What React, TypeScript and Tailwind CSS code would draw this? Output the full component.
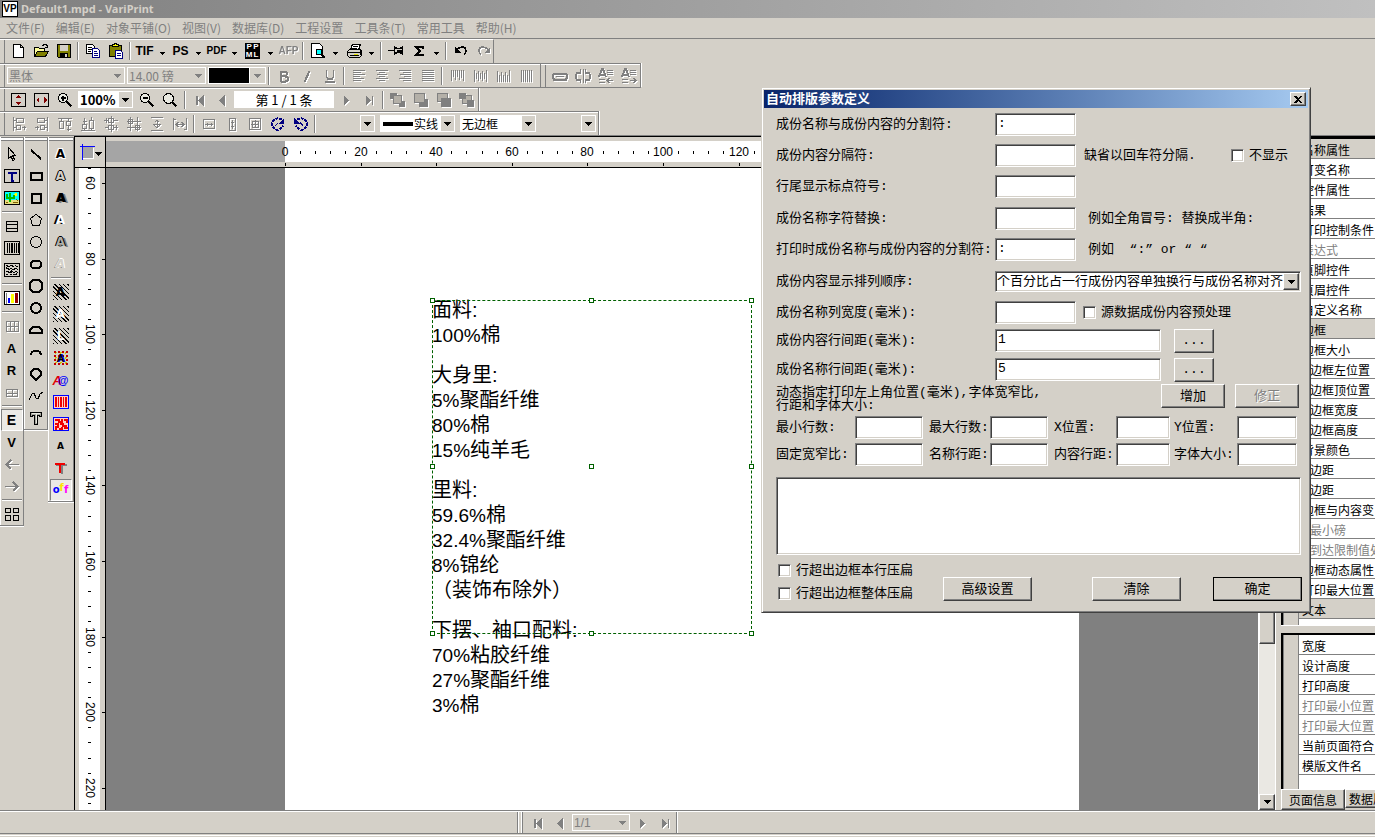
import { ReactNode } from 'react';
import clsx from 'clsx';

const MENU = ['文件(F)', '编辑(E)', '对象平铺(O)', '视图(V)', '数据库(D)', '工程设置', '工具条(T)', '常用工具', '帮助(H)'];

// 16x16 glyphs, drawn with the current text colour unless they carry their own
const ICONS: Record<string, ReactNode> = {
  new: <path d="M3.5 1.5h7l3 3v10h-10zM10.5 1.5v3h3" fill="#fff" />,
  open: (
    <>
      <path d="M1.5 13.5v-9h4l1 1h5v3" fill="#ffff9c" />
      <path d="M1.5 13.5l3-5h11l-3 5z" fill="#808000" />
      <path d="M9 2.5h1l1-1h2l1 1v2M12 4.5h3" />
    </>
  ),
  save: (
    <>
      <path d="M1.5 1.5h13v13h-12l-1-1z" fill="#808000" />
      <path d="M4 2h8v6H4z" fill="#d4d0c8" stroke="none" />
      <path d="M4 10h8v5H4z" fill="#000" stroke="none" />
      <path d="M9 11h2v3H9z" fill="#d4d0c8" stroke="none" />
    </>
  ),
  copy: (
    <>
      <path d="M1.5 1.5h6l2 2v7h-8z" fill="#fff" />
      <path d="M3 4.5h4M3 6.5h4M3 8.5h3" />
      <path d="M7.5 5.5h5l2 2v7h-7z" fill="#fff" stroke="#000080" />
      <path d="M9 8.5h3M9 10.5h4M9 12.5h4" stroke="#000080" />
    </>
  ),
  paste: (
    <>
      <path d="M1.5 2.5h12v11h-12z" fill="#808000" />
      <path d="M4.5 3.5h6v-2h-2v-1h-2v1h-2z" fill="#ffff00" />
      <path d="M7.5 7.5h5l2 2v6h-7z" fill="#fff" stroke="#000080" />
      <path d="M9 10.5h4M9 12.5h4" stroke="#000080" />
    </>
  ),
  preview: (
    <>
      <path d="M1.5 .5h8l3 3v11h-11z" fill="#fff" />
      <circle cx="9" cy="9" r="3" fill="#00ffff" />
      <path d="M11 11l4 4" strokeWidth="2" />
    </>
  ),
  print: (
    <>
      <path d="M4.5 7l2-6h8l-2 6" fill="#fff" />
      <path d="M7 3.5h5M6 5.5h5" />
      <path d="M1.5 8.5l2-2h11l1 2v4l-2 2h-10l-2-2z" fill="#d4d0c8" />
      <path d="M2 9.5h12M4 12.5h9M14.5 8v4" />
      <path d="M8 11h4" stroke="#e0e000" />
    </>
  ),
  pin: (
    <>
      <path d="M0 7.5h6" strokeWidth="1.5" />
      <path d="M6.5 3v9M14.5 3v9M7 5.5h7M7 9.5h7" />
      <path d="M9 7h5v3H9z" fill="#000" stroke="none" />
      <path d="M7.5 4l2 2M13.5 4l-2 2M7.5 11l2-2M13.5 11l-2-2" />
    </>
  ),
  sigma: <path d="M12 5.5V4H5l4 4-4 4h7v-1.5" strokeWidth="2" />,
  undo: (
    <>
      <path d="M4 7c2-3 6-4 8-2 2 3 1 5-1 6" strokeWidth="1.5" />
      <path d="M2 4v6h6z" fill="currentColor" stroke="none" />
    </>
  ),
  redo: (
    <>
      <path d="M12 7c-2-3-6-4-8-2-2 3-1 5 1 6" strokeWidth="1.5" />
      <path d="M14 4v6H8z" fill="currentColor" stroke="none" />
    </>
  ),
  bold: <path d="M4.5 3.5h5l1.5 1v2l-1.5 1.5h-4.5M9.5 8.5l2 1v3l-2 1h-5M5 3v11" strokeWidth="2" />,
  italic: <path d="M10.5 3l-5 11" strokeWidth="2" />,
  underline: <path d="M4.5 2v7l1.5 2h4l1.5-2V2M3 14h10" strokeWidth="1.5" />,
  alignLeft: <path d="M2 2.5h12M2 4.5h8M2 6.5h12M2 8.5h7M2 10.5h11M2 12.5h8" />,
  alignCenter: <path d="M2 2.5h12M5 4.5h6M3 6.5h10M5 8.5h6M2 10.5h12M5 12.5h6" />,
  alignRight: <path d="M2 2.5h12M6 4.5h8M3 6.5h11M7 8.5h7M2 10.5h12M6 12.5h8" />,
  justify: <path d="M2 2.5h12M2 4.5h12M2 6.5h12M2 8.5h12M2 10.5h12M2 12.5h12" />,
  vTop: <path d="M2.5 2v11M4.5 2v7M6.5 2v10M8.5 2v7M10.5 2v10M12.5 2v8M14.5 2v11" />,
  vMid: <path d="M2.5 2v12M4.5 5v6M6.5 3v10M8.5 5v6M10.5 3v10M12.5 5v6M14.5 2v12" />,
  vBottom: <path d="M2.5 3v11M4.5 7v7M6.5 4v10M8.5 7v7M10.5 4v10M12.5 7v7M14.5 2v12" />,
  vFull: <path d="M3.5 2v12M5.5 2v12M7.5 2v12M9.5 2v12M11.5 2v12M13.5 2v12" />,
  link: (
    <>
      <path d="M2 5.500h12l1 2v2l-1 2H2l-1-2v-2z" strokeWidth="2" />
      <path d="M4 8.500h8" strokeWidth="1.500" />
    </>
  ),
  unlink: (
    <>
      <path d="M6 5H2L1 7v3l1 2h4M10 5h4l1 2v3l-1 2h-4" strokeWidth="2" />
      <path d="M8 1v14M5 1l1 3M11 1l-1 3M5 15l1-3M11 15l-1-3" />
    </>
  ),
  fontLeft: (
    <>
      <path d="M1 9l3-8h1l3 8M2.5 6.5h4" strokeWidth="2" />
      <path d="M9 2.5h6M9 4.5h6M9 6.5h6M1 11.5h6M1 14.5h6" />
      <path d="M15 12.5H9M11.5 10L9 12.5l2.5 2.5" strokeWidth="1.5" />
    </>
  ),
  fontRight: (
    <>
      <path d="M1 9l3-8h1l3 8M2.5 6.5h4" strokeWidth="2" />
      <path d="M9 2.5h6M9 4.5h6M9 6.5h6M1 11.5h6M1 14.5h6" />
      <path d="M9 12.5h6M12.5 10l2.5 2.5-2.5 2.5" strokeWidth="1.5" />
    </>
  ),
  fitHeight: (
    <>
      <path d="M.5 1.5h14v13H.5z" />
      <path d="M7.500 3l3 3h-6zM7.500 13l3-3h-6z" fill="#800000" stroke="none" />
    </>
  ),
  fitWidth: (
    <>
      <path d="M.5 1.5h14v13H.5z" />
      <path d="M2 8l3-3v6zM13 8l-3-3v6zM5 7.500h1M9 7.500h1" fill="#800000" stroke="none" />
    </>
  ),
  zoomIn: (
    <>
      <circle cx="6" cy="6" r="4.5" fill="#e8e8e0" />
      <path d="M3.5 6h5M6 3.5v5" strokeWidth="1.5" />
      <path d="M9.5 9.5l5 5" strokeWidth="2.5" />
    </>
  ),
  zoomOut: (
    <>
      <circle cx="6" cy="6" r="4.5" fill="#e8e8e0" />
      <path d="M3.5 6h5" strokeWidth="1.5" />
      <path d="M9.5 9.5l5 5" strokeWidth="2.5" />
    </>
  ),
  zoom: (
    <>
      <circle cx="6.5" cy="6.5" r="5" fill="#e8e8e0" />
      <path d="M10 10l4.5 4.5" strokeWidth="2.5" />
    </>
  ),
  first: <path d="M4.5 4v9M5.5 4v9M11 4v9L7 8.5z" fill="currentColor" />,
  prev: <path d="M9 4v9L5 8.5z" fill="currentColor" />,
  next: <path d="M6 4v9l4-4.5z" fill="currentColor" />,
  last: <path d="M11.5 4v9M5 4v9l4-4.5z" fill="currentColor" />,
  front: (
    <>
      <path d="M0 1h7v6H0zM9 9h6v6H9z" fill="currentColor" stroke="none" />
      <path d="M3.5 3.5h8v8h-8z" fill="#b4b0a8" />
    </>
  ),
  forward: (
    <>
      <path d="M6 7h9v8H6z" fill="currentColor" stroke="none" />
      <path d="M1.5 1.500h10v9h-10z" fill="#b4b0a8" />
    </>
  ),
  backward: (
    <>
      <path d="M1.5 1.500h10v8h-10z" fill="#b4b0a8" />
      <path d="M5 6h10v9H5z" fill="currentColor" stroke="none" />
    </>
  ),
  back: (
    <>
      <path d="M3.5 3.5h9v8h-9z" fill="#b4b0a8" />
      <path d="M0 1h7v6H0zM8 8h7v7H8z" fill="currentColor" stroke="none" />
    </>
  ),
  objLeft: <path d="M2.5 1v14M3 4.5h2M5.5 2.5h7v4h-7zM3 11.5h2M5.5 9.5h4v4h-4zM11 11.5h4M13 9.5v4" />,
  objRight: <path d="M13.5 1v14M11 4.5h2M3.5 2.5h7v4h-7zM11 11.5h2M6.5 9.5h4v4h-4zM1 11.5h4M3 9.5v4" />,
  objTop: <path d="M1 2.5h14M4.5 3v2M2.5 5.5h4v7h-4zM11.5 3v2M9.5 5.5h4v4h-4zM11.5 10v5M9.5 13h4" />,
  objBottom: <path d="M1 14.5h14M4.5 12v2M2.5 8.5h4v4h-4zM4.5 2v6M2.5 5h4M9.5 4.5h4v8h-4zM11.5 12v2M11.5 1v3" />,
  objCenter: <path d="M1 4.5h4M10 4.5h5M5.5 2.5h5v4h-5zM2 11.5h3M11 11.5h4M5.5 9.5h5v4h-5zM8 0v16M3 2v5M13 9v5" />,
  objMiddle: <path d="M1 5.5h14M1 11.5h14M4.5 1v14M11.5 1v14M2.5 3.5h4v4h-4zM9.5 9.5h4v4h-4z" />,
  spaceV: <path d="M2 1.5h12M2 14.5h12M8 4v8M5.5 6.5L8 4l2.5 2.5M5.5 9.5L8 12l2.5-2.5M4 8.5h8" />,
  spaceH: <path d="M1.5 2v12M14.5 2v12M4 8.5h8M6.5 6L4 8.5 6.5 11M9.5 6l2.5 2.5L9.5 11M1 3.5h3M12 13.5h3" />,
  sameW: <path d="M2.5 3.5h11v9h-11zM4 8.500h8M6 7v3M10 7v3" />,
  sameH: <path d="M5.5 2.5h6v12h-6zM8.5 4v9M7 6.500h3M7 10.500h3" />,
  sameSize: <path d="M2.5 2.5h11v11h-11zM4 8.500h8M8.500 4v8M5.500 5.500h6v6h-6z" />,
  rotateRight: (
    <>
      <path d="M12 4C9 1 3 2 2 8c0 4 4 7 8 5l3-3" strokeWidth="2" strokeDasharray="3 1" />
      <path d="M14 2v6H8z" fill="currentColor" stroke="none" />
      <path d="M5 10l3-3" />
    </>
  ),
  rotateLeft: (
    <>
      <path d="M4 4c3-3 9-2 10 4 0 4-4 7-8 5l-3-3" strokeWidth="2" strokeDasharray="3 1" />
      <path d="M1 2v6h6z" fill="currentColor" stroke="none" />
      <path d="M7 6l3 4" />
    </>
  ),
  // drawing tools
  pointer: <path d="M4.5 1.5v11l2.500-2 2 4 1.500-1-2-4h3z" fill="#d4d0c8" />,
  text: (
    <>
      <path d="M.5 1.5h15v13H.5z" fill="#d4d0c8" />
      <path d="M4.5 6V4.5h7V6M8 4.5v8M6.5 12.5h3" stroke="#000080" strokeWidth="2" />
    </>
  ),
  picture: (
    <>
      <path d="M.5 1.5h15v13H.5z" fill="#00ffff" />
      <path d="M1 10h14v4H1z" fill="#e8e080" stroke="none" />
      <path d="M3 4v4h7V5M6 3v9" stroke="#00c000" strokeWidth="2" />
      <circle cx="12" cy="4.5" r="1.5" fill="#ffff00" stroke="none" />
      <path d="M9 12h5M12 9l2 2M2 12h2" stroke="#806000" />
    </>
  ),
  list: <path d="M2.5 3.5h11v10h-11zM3 6.5h10M3 10.5h10" />,
  barcode: (
    <>
      <path d="M.5 1.5h15v13H.5z" fill="#d4d0c8" />
      <path d="M3.5 3v10M12.5 3v10M14.500 3v10M5.500 3v10" />
      <path d="M8 3v10" strokeWidth="2" />
      <path d="M10.500 3v10" />
    </>
  ),
  matrix: (
    <>
      <path d="M.5 1.5h15v13H.5z" fill="#d4d0c8" />
      <path
        d="M2 3.500h2M6 3.500h3M11 3.500h1M3 4.500h3M8 4.500h2M12 4.500h2M2 6.500h3M6 6.500h2M10 6.500h3M4 7.500h2M8 7.500h3M13 7.500h1M2 9.500h3M6 9.500h3M11 9.500h2M4 10.500h3M9 10.500h2M13 10.500h1M2 12.500h2M6 12.500h2M9 12.500h3M2.500 5v2M7.500 8v3M12.500 11v2"
      />
    </>
  ),
  chart: (
    <>
      <path d="M.5 1.5h15v13H.5z" fill="#fff" />
      <path d="M2.500 3v10.500" stroke="#808080" />
      <path d="M4 8h2v5H4z" fill="#0000ff" stroke="none" />
      <path d="M7 4h3v9H7z" fill="#ffff00" stroke="none" />
      <path d="M11 3h3v10h-3z" fill="#900000" stroke="none" />
    </>
  ),
  grid: <path d="M2.5 3.5h12v10h-12zM6.5 4v10M10.5 4v10M3 8.5h12" />,
  gridSmall: <path d="M2.5 5.5h11v7h-11zM8 6v6M3 9h11" />,
  arrowLeft: <path d="M15 8.5H3M7 4L2.5 8.5 7 13" strokeWidth="1.5" />,
  arrowRight: <path d="M1 8.5h12M9 4l4.5 4.5L9 13" strokeWidth="1.5" />,
  blocks: <path d="M1.5 2.5h5v4h-5zM9.5 2.5h5v4h-5zM1.5 9.5h5v5h-5zM9.5 9.5h5v5h-5z" />,
  line: <path d="M3 4l10 9" strokeWidth="2" />,
  rect: <path d="M3 5h11v7H3z" strokeWidth="2" />,
  square: <path d="M4 4h9v9H4z" strokeWidth="2" />,
  pentagon: <path d="M8 2.5l5.5 4-2 7h-7l-2-7z" />,
  circle: <circle cx="8" cy="8" r="5.5" />,
  pill: <rect x="3" y="5" width="10" height="7" rx="3" strokeWidth="2" />,
  octagon: <path d="M5 2h6l3 3v6l-3 3H5l-3-3V5z" strokeWidth="2" />,
  ellipse: <circle cx="8" cy="8" r="5" strokeWidth="2" />,
  halfMoon: <path d="M2 11V8l3-3h6l3 3v3z" strokeWidth="2" />,
  arc: <path d="M3 11c1-6 9-6 10 0" strokeWidth="2" />,
  pie: <path d="M8 14L3 9V6l3-3h4l3 3v3z" strokeWidth="2" />,
  curve: <path d="M1 12l3-6 2-1 2 5 2 1 2-5 3-2" />,
  bigT: (
    <>
      <path d="M2.500 2.500h11v4h-2v-1h-2v9h-3v-9h-2v1h-2z" fill="#a8a8a0" />
      <path d="M4 3.500h8M8 4v9" stroke="#e8e8e0" />
    </>
  ),
};

function Icon({ name }: { name: string }) {
  return (
    <svg className="h-4 w-4 shrink-0" viewBox="0 0 16 16" fill="none" stroke="currentColor" shapeRendering="crispEdges">
      {ICONS[name]}
    </svg>
  );
}

function Arrow() {
  return (
    <svg className="h-[4px] w-[7px] shrink-0" viewBox="0 0 7 4" shapeRendering="crispEdges">
      <path d="M0 0h7L3.5 4z" fill="currentColor" />
    </svg>
  );
}

const dimmed = 'text-[#808080] drop-shadow-[1px_1px_0_#fff]';

function Tool({ name, off, blue, children }: { name: string; off?: boolean; blue?: boolean; children?: ReactNode }) {
  return (
    <button
      aria-label={name}
      disabled={off}
      className={clsx('flex h-[22px] w-[23px] shrink-0 items-center justify-center', off && dimmed, blue && 'text-[#000080]')}
    >
      {children ?? <Icon name={name} />}
    </button>
  );
}

function Drop() {
  return (
    <button aria-label="more" className="flex h-[22px] w-[13px] shrink-0 items-center justify-center pt-1">
      <svg className="h-[3px] w-[5px]" viewBox="0 0 5 3" shapeRendering="crispEdges">
        <path d="M0 0h5L2.5 3z" />
      </svg>
    </button>
  );
}

function Sep() {
  return <span className="mx-[2px] h-[18px] w-[2px] shrink-0 border-r border-l border-r-white border-l-[#808080]" />;
}

function Bar({ className, children }: { className?: string; children: ReactNode }) {
  return (
    <div
      className={clsx(
        'flex h-6 items-center self-start border-t border-r border-[#808080] pl-[7px] shadow-[inset_0_1px_0_#fff,inset_4px_0_0_#d4d0c8,inset_5px_0_0_#808080,1px_0_0_#fff]',
        className,
      )}
    >
      {children}
    </div>
  );
}

function Combo({ label, value, off, className, children }: { label: string; value: string; off?: boolean; className?: string; children?: ReactNode }) {
  return (
    <span className={clsx('relative flex h-[17px] shrink-0 items-center border border-white', off ? 'text-[#808080]' : 'bg-white', className)}>
      {children}
      <select aria-label={label} disabled={off} className="h-full w-full min-w-0 appearance-none overflow-hidden pr-[13px] pl-px opacity-100 outline-none">
        <option>{value}</option>
      </select>
      <span className="pointer-events-none absolute top-0 right-0 flex h-full w-[13px] items-center justify-center bg-[#d4d0c8]">
        <Arrow />
      </span>
    </span>
  );
}

function Toolbars() {
  const word = "font-['Liberation_Sans',sans-serif] font-bold";
  return (
    <div className="flex flex-col border-b border-[#808080] text-[12px]">
      <div className="border-t border-[#808080]">
        <div className="flex h-6 w-[494px] items-center border-t border-r border-t-white border-r-[#808080] pb-px pl-[6px] shadow-[inset_4px_0_0_#d4d0c8,inset_5px_0_0_#808080]">
          <Tool name="new" />
          <Tool name="open" />
          <Tool name="save" />
          <Sep />
          <Tool name="copy" />
          <Tool name="paste" />
          <Sep />
          <Tool name="TIF"><span className={clsx(word, 'text-[12px]')}>TIF</span></Tool>
          <Drop />
          <Tool name="PS"><span className={clsx(word, 'text-[12px]')}>PS</span></Tool>
          <Drop />
          <Tool name="PDF"><span className={clsx(word, 'text-[10px]')}>PDF</span></Tool>
          <Drop />
          <Tool name="PPML">
            <span className="grid grid-cols-2 bg-black px-px font-['Liberation_Sans',sans-serif] text-[8px] leading-2 font-bold text-white">
              <span>P</span><span>P</span><span>M</span><span>L</span>
            </span>
          </Tool>
          <Drop />
          <Tool name="AFP" off><span className={clsx(word, 'text-[10px]')}>AFP</span></Tool>
          <Sep />
          <Tool name="preview" />
          <Drop />
          <Tool name="print" />
          <Drop />
          <Sep />
          <Tool name="pin" />
          <Tool name="sigma" />
          <Drop />
          <Sep />
          <Tool name="undo" />
          <Tool name="redo" off />
        </div>
      </div>
      <div className="flex">
        <Bar className="w-[541px]">
          <Combo label="字体" value="黑体" off className="w-[118px]" />
          <Combo label="字号" value="14.00 镑" off className="ml-[2px] w-[79px]" />
          <span className="ml-[2px] flex h-[17px] w-[58px] border border-white bg-black">
            <button aria-label="颜色" className="ml-auto flex w-[16px] items-center justify-center border-l border-white bg-[#d4d0c8] text-[#808080]">
              <Arrow />
            </button>
          </span>
          <Sep />
          <Tool name="bold" off />
          <Tool name="italic" off />
          <Tool name="underline" off />
          <Sep />
          <Tool name="alignLeft" off />
          <Tool name="alignCenter" off />
          <Tool name="alignRight" off />
          <Tool name="justify" off />
          <Sep />
          <Tool name="vTop" off />
          <Tool name="vMid" off />
          <Tool name="vBottom" off />
          <Tool name="vFull" off />
        </Bar>
        <Bar className="w-[100px] pl-[5px]">
          <Tool name="link" off />
          <Tool name="unlink" off />
          <Tool name="fontLeft" off />
          <Tool name="fontRight" off />
        </Bar>
      </div>
      <div className="flex">
        <Bar className="w-[479px] pl-[6px]">
          <Tool name="fitHeight" />
          <Tool name="fitWidth" />
          <Tool name="zoomIn" />
          <Combo label="缩放" value="100%" className="mx-[2px] w-[55px] text-[13px] font-bold" />
          <Tool name="zoomOut" />
          <Tool name="zoom" />
          <span className="w-1" />
          <Sep />
          <Tool name="first" off />
          <Tool name="prev" off />
          <input aria-label="记录" readOnly value="第 1 / 1 条" className="h-[17px] w-[100px] bg-white text-center text-[13px]" />
          <Tool name="next" off />
          <Tool name="last" off />
          <Sep />
          <Tool name="front" off />
          <Tool name="forward" off />
          <Tool name="backward" off />
          <Tool name="back" off />
        </Bar>
        <div className="h-6 w-[162px] border-t border-[#808080]" />
      </div>
      <div className="flex">
        <Bar className="w-[599px]">
          <Tool name="objLeft" off />
          <Tool name="objRight" off />
          <Tool name="objTop" off />
          <Tool name="objBottom" off />
          <Tool name="objCenter" off />
          <Tool name="objMiddle" off />
          <Tool name="spaceV" off />
          <Tool name="spaceH" off />
          <Sep />
          <Tool name="sameW" off />
          <Tool name="sameH" off />
          <Tool name="sameSize" off />
          <Tool name="rotateRight" blue />
          <Tool name="rotateLeft" blue />
          <Sep />
          <Combo label="箭头" value="" className="ml-[42px] w-[15px]" />
          <Combo label="线型" value="实线" className="ml-[5px] w-[75px]">
            <span className="ml-[2px] h-1 w-[30px] shrink-0 bg-black" />
          </Combo>
          <Combo label="边框" value="无边框" className="ml-[5px] w-[76px]" />
          <Combo label="样式" value="" className="ml-[45px] w-[15px]" />
        </Bar>
      </div>
    </div>
  );
}

function Column({ className, children }: { className?: string; children: ReactNode }) {
  return (
    <div className={clsx('flex flex-col items-center self-start border-r border-b border-[#808080] pt-[6px] shadow-[inset_1px_0_0_#fff,inset_0_1px_0_#808080,inset_0_3px_0_#fff,inset_0_4px_0_#808080,0_1px_0_#fff]', className)}>
      {children}
    </div>
  );
}

function HSep() {
  return <span className="my-[2px] h-[2px] w-[20px] border-t border-b border-t-[#808080] border-b-white" />;
}

function Letter({ name, className }: { name: string; className?: string }) {
  return (
    <Tool name={name}>
      <span className={clsx('flex h-4 w-4 items-center justify-center leading-none font-bold', className)}>{name}</span>
    </Tool>
  );
}

const pressed = 'flex h-[22px] w-[22px] items-center justify-center border border-t-[#808080] border-r-white border-b-white border-l-[#808080] bg-[#eceae6]';
const hatch = 'bg-[repeating-linear-gradient(45deg,#000_0_1px,#d4d0c8_1px_3px)]';
const glyph = "font-['DejaVu_Sans',sans-serif] text-[12px]";

function ToolColumns() {
  return (
    <div className="flex w-[74px] shrink-0 font-['Liberation_Sans',sans-serif]">
      <Column className="w-6">
        <Tool name="pointer" />
        <Tool name="text" />
        <Tool name="picture" />
        <HSep />
        <Tool name="list" />
        <Tool name="barcode" />
        <Tool name="matrix" />
        <HSep />
        <Tool name="chart" />
        <HSep />
        <Tool name="grid" off />
        <Letter name="A" className="text-[13px]" />
        <Letter name="R" className="text-[13px]" />
        <Tool name="gridSmall" off />
        <HSep />
        <button className={clsx(pressed, 'text-[14px] font-bold')}>E</button>
        <Letter name="V" className="text-[13px]" />
        <Tool name="arrowLeft" off />
        <Tool name="arrowRight" off />
        <HSep />
        <Tool name="blocks" />
      </Column>
      <Column className="w-6">
        <Tool name="line" />
        <Tool name="rect" />
        <Tool name="square" />
        <Tool name="pentagon" />
        <Tool name="circle" />
        <Tool name="pill" />
        <Tool name="octagon" />
        <Tool name="ellipse" />
        <Tool name="halfMoon" />
        <Tool name="arc" />
        <Tool name="pie" />
        <Tool name="curve" />
        <Tool name="bigT" />
      </Column>
      <Column className="w-[26px]">
        <Letter name="A" className={clsx(glyph, '[text-shadow:1px_1px_0_#fff,-1px_-1px_0_#fff,1px_-1px_0_#fff,-1px_1px_0_#fff]')} />
        <Letter name="A" className={clsx(glyph, 'text-[#d4d0c8] [text-shadow:1px_0_0_#000,-1px_0_0_#000,0_1px_0_#000,0_-1px_0_#000]')} />
        <Letter name="A" className={clsx(glyph, '[text-shadow:1px_0_0_#000,3px_1px_0_#808080]')} />
        <Letter name="A" className={clsx(glyph, 'text-white [text-shadow:-1px_0_0_#000,-2px_0_0_#000]')} />
        <Letter name="A" className={clsx(glyph, 'text-[#b0b0a8] [text-shadow:1px_0_0_#000,-1px_0_0_#000,0_-1px_0_#000,3px_1px_0_#808080]')} />
        <Letter name="A" className={clsx(glyph, 'text-[#d4d0c8] italic [text-shadow:1px_0_0_#fff,0_-1px_0_#fff,-1px_0_0_#808080]')} />
        <HSep />
        <Letter name="A" className={clsx(glyph, hatch)} />
        <Letter name="A" className={clsx(glyph, hatch, 'text-white')} />
        <Letter name="L" className={clsx(glyph, hatch, 'text-white')} />
        <Tool name="A">
          <span className="flex h-4 w-4 items-center justify-center bg-[radial-gradient(#c00000_1px,transparent_1px),radial-gradient(#d0c000_1px,transparent_1px)] bg-[size:4px_4px,5px_5px] text-[11px] leading-none font-bold [text-shadow:1px_0_0_#0000ff]">A</span>
        </Tool>
        <Tool name="A@">
          <span className="flex h-4 items-center text-[13px] leading-none font-bold text-[#e00000] italic">
            A<span className="-ml-1 text-[11px] text-[#0000ff] not-italic">@</span>
          </span>
        </Tool>
        <Tool name="barcodeRed">
          <svg className="h-4 w-4" viewBox="0 0 16 16" shapeRendering="crispEdges">
            <path d="M.5 1.5h15v13H.5z" fill="#ffd0c8" stroke="#0000ff" />
            <path d="M3 3v10M8 3v10M13 3v10" stroke="#f00000" strokeWidth="2" />
            <path d="M5.5 3v10M10.5 3v10" stroke="#f00000" />
          </svg>
        </Tool>
        <Tool name="matrixRed">
          <svg className="h-4 w-4" viewBox="0 0 16 16" fill="none" shapeRendering="crispEdges">
            <path d="M.5 1.5h15v13H.5z" fill="#ffd0c8" stroke="#0000ff" />
            <path d="M2 4h4v2h3V3M11 4h3v3M2 8h3v3H2M7 8h3v2h4M6 13h3v-2M11 12h3v1M2 13h2M12 9v2" stroke="#f00000" strokeWidth="2" />
          </svg>
        </Tool>
        <Letter name="A" className="font-['DejaVu_Sans',sans-serif] text-[9px]" />
        <Tool name="T">
          <svg className="h-4 w-4" viewBox="0 0 16 16" fill="none" shapeRendering="crispEdges">
            <path d="M3 5h10v1M9 5v9" stroke="#808080" strokeWidth="2" />
            <path d="M2 4h10M7 4v9" stroke="#f00000" strokeWidth="2" />
          </svg>
        </Tool>
        <button className={clsx(pressed, "font-['DejaVu_Sans',sans-serif] text-[10px] font-bold")}>
          <span className="text-[#0000ff]">o</span>
          <span className="pb-1 text-[#ffe000]">f</span>
          <span className="text-[#ff00ff]">f</span>
        </button>
      </Column>
    </div>
  );
}

const MM = 3.78;
const STEPS = Array.from({ length: 57 }, (_, i) => i * 4);

function TopRuler() {
  return (
    <svg className="h-full w-full font-['Liberation_Sans',sans-serif] text-[12px]" shapeRendering="crispEdges">
      <rect x="0" y="4" width="179" height="21" fill="#a5a5a5" />
      <rect x="179" y="4" width="974" height="21" fill="#fff" />
      {STEPS.map((mm) => {
        const x = Math.round(179 + mm * MM);
        return mm % 20 === 0 ? (
          <g key={mm}>
            <text x={x} y="19" textAnchor="middle">{mm}</text>
            <rect x={x} y="26" width="1" height="3" />
          </g>
        ) : (
          <rect key={mm} x={x} y="14" width="1" height="3" />
        );
      })}
    </svg>
  );
}

function SideRuler() {
  return (
    <svg className="h-full w-full font-['Liberation_Sans',sans-serif] text-[12px]" shapeRendering="crispEdges">
      <rect x="4" y="0" width="21" height="100%" fill="#fff" />
      {STEPS.filter((mm) => mm >= 56).map((mm) => {
        const y = Math.round(15 + (mm - 60) * MM);
        return mm % 20 === 0 ? (
          <g key={mm}>
            <text x="11" y={y} textAnchor="middle" transform={`rotate(90 11 ${y})`}>{mm}</text>
            <rect x="27" y={y} width="3" height="1" />
          </g>
        ) : (
          <rect key={mm} x="13" y={y} width="3" height="1" />
        );
      })}
    </svg>
  );
}

const LABEL_TEXT = [
  [['', '面料:'], ['100%', '棉']],
  [['', '大身里:'], ['5%', '聚酯纤维'], ['80%', '棉'], ['15%', '纯羊毛']],
  [['', '里料:'], ['59.6%', '棉'], ['32.4%', '聚酯纤维'], ['8%', '锦纶'], ['', '（装饰布除外）']],
  [['', '下摆、袖口配料:'], ['70%', '粘胶纤维'], ['27%', '聚酯纤维'], ['3%', '棉']],
];

const HANDLES = [
  '-top-[3px] -left-[3px]',
  '-top-[3px] left-[156px]',
  '-top-[3px] -right-[3px]',
  'top-[163px] -left-[3px]',
  'top-[163px] left-[156px]',
  'top-[163px] -right-[3px]',
  '-bottom-[3px] -left-[3px]',
  '-bottom-[3px] left-[156px]',
  '-right-[3px] -bottom-[3px]',
];

function Page() {
  return (
    <div className="relative w-[794px] shrink-0 overflow-hidden bg-white">
      <div className="absolute top-[130px] left-[147px] flex flex-col gap-[15px] font-['Liberation_Sans','Noto_Sans_CJK_SC',sans-serif] text-[20px] leading-[25px] whitespace-nowrap">
        {LABEL_TEXT.map((group, i) => (
          <div key={i}>
            {group.map(([num, name]) => (
              <p key={num + name} className="h-[25px]">
                <span className="text-[19px]">{num}</span>
                {name}
              </p>
            ))}
          </div>
        ))}
      </div>
      <div className="absolute top-[132px] left-[147px] h-[334px] w-[320px] border border-dashed border-[#006000]">
        {HANDLES.map((pos) => (
          <span key={pos} className={clsx('absolute h-[5px] w-[5px] border border-[#006000] bg-white', pos)} />
        ))}
      </div>
    </div>
  );
}

type Row = { text: string; head?: boolean; off?: boolean; sub?: boolean };

const OBJECT_ROWS: Row[] = [
  { text: '名称属性', head: true },
  { text: '可变名称' },
  { text: '控件属性' },
  { text: '结果' },
  { text: '打印控制条件' },
  { text: '表达式', off: true },
  { text: '页脚控件' },
  { text: '页眉控件' },
  { text: '自定义名称' },
  { text: '边框', head: true },
  { text: '边框大小' },
  { text: '边框左位置', sub: true },
  { text: '边框顶位置', sub: true },
  { text: '边框宽度', sub: true },
  { text: '边框高度', sub: true },
  { text: '背景颜色' },
  { text: '边距', sub: true },
  { text: '边距', sub: true },
  { text: '边框与内容变' },
  { text: '最小磅', off: true, sub: true },
  { text: '到达限制值处', off: true, sub: true },
  { text: '边框动态属性' },
  { text: '打印最大位置' },
  { text: '文本', head: true },
];

const PAGE_ROWS: Row[] = [
  { text: '宽度' },
  { text: '设计高度' },
  { text: '打印高度' },
  { text: '打印最小位置', off: true },
  { text: '打印最大位置', off: true },
  { text: '当前页面符合' },
  { text: '模版文件名' },
];

function PropertyGrid({ rows, className }: { rows: Row[]; className?: string }) {
  return (
    <div className={clsx('flex overflow-hidden border-t-2 border-l-2 border-black bg-white', className)}>
      <div className="w-4 shrink-0 border-r border-l border-r-[#808080] border-l-[#808080] bg-[#d4d0c8]" />
      <ul className="min-w-0 flex-1">
        {rows.map((row, i) => (
          <li
            key={i}
            className={clsx(
              'h-5 overflow-hidden border-b border-[#808080] leading-[21px] whitespace-nowrap',
              row.head && 'bg-[#d4d0c8]',
              row.off && 'text-[#808080]',
              row.sub ? 'pl-[11px]' : 'pl-[3px]',
            )}
          >
            {row.text}
          </li>
        ))}
      </ul>
    </div>
  );
}

const raised =
  'border border-t-white border-r-[#404040] border-b-[#404040] border-l-white bg-[#d4d0c8] shadow-[inset_-1px_-1px_0_#808080]';
const sunken =
  'border border-t-[#808080] border-r-white border-b-white border-l-[#808080] bg-white shadow-[inset_1px_1px_0_#404040,inset_-1px_-1px_0_#d4d0c8]';

function Field({ label, value = '', className }: { label: string; value?: string; className?: string }) {
  return <input id={label} defaultValue={value} className={clsx('h-[23px] shrink-0 px-[2px] pb-[2px] outline-none', sunken, className)} />;
}

function Push({ children, className }: { children: ReactNode; className?: string }) {
  return <button className={clsx('h-6 shrink-0 leading-none', raised, className)}>{children}</button>;
}

function Check({ label, className }: { label: string; className?: string }) {
  return (
    <label className={clsx('flex items-center gap-[5px]', className)}>
      <input type="checkbox" className={clsx('h-[13px] w-[13px] appearance-none', sunken)} />
      {label}
    </label>
  );
}

function FormRow({ label, className, children }: { label: string; className: string; children: ReactNode }) {
  return (
    <div className={clsx('flex items-center', className)}>
      <label htmlFor={label} className="w-[219px] shrink-0">{label}</label>
      {children}
    </div>
  );
}

const SIZE_FIELDS = [
  ['最小行数:', 'w-[68px]'],
  ['最大行数:', 'w-[58px]'],
  ['X位置:', 'w-[54px]'],
  ['Y位置:', 'w-[60px]'],
  ['固定宽窄比:', 'w-[68px]'],
  ['名称行距:', 'w-[58px]'],
  ['内容行距:', 'w-[54px]'],
  ['字体大小:', 'w-[60px]'],
];

function LayoutDialog() {
  return (
    <div
      role="dialog"
      className="absolute top-[87px] left-[761px] flex h-[526px] w-[550px] flex-col border border-t-[#d4d0c8] border-r-[#404040] border-b-[#404040] border-l-[#d4d0c8] bg-[#d4d0c8] p-[2px] font-['Liberation_Mono','Noto_Sans_CJK_SC',monospace] text-[13px] leading-[13px] whitespace-nowrap shadow-[inset_1px_1px_0_#fff,inset_-1px_-1px_0_#808080]"
    >
      <div className="flex h-[18px] shrink-0 items-center justify-between bg-linear-to-r from-[#0a246a] to-[#a6caf0] pr-[2px] pl-[2px] font-bold text-white">
        自动排版参数定义
        <button aria-label="关闭" className={clsx('flex h-[14px] w-4 items-center justify-center text-black', raised)}>
          <svg className="h-[7px] w-2" viewBox="0 0 8 7" shapeRendering="crispEdges">
            <path d="M0 0h2l2 2 2-2h2L5 3.5 8 7H6L4 5 2 7H0l3-3.5z" />
          </svg>
        </button>
      </div>
      <div className="flex flex-1 flex-col pr-[7px] pl-[12px]">
        <FormRow label="成份名称与成份内容的分割符:" className="h-[32px]">
          <Field label="成份名称与成份内容的分割符:" value=":" className="w-[81px]" />
        </FormRow>
        <FormRow label="成份内容分隔符:" className="h-[31px]">
          <Field label="成份内容分隔符:" className="w-[81px]" />
          <span className="ml-2">缺省以回车符分隔.</span>
          <Check label="不显示" className="mr-[13px] ml-auto" />
        </FormRow>
        <FormRow label="行尾显示标点符号:" className="h-[31px]">
          <Field label="行尾显示标点符号:" className="w-[81px]" />
        </FormRow>
        <FormRow label="成份名称字符替换:" className="h-[32px]">
          <Field label="成份名称字符替换:" className="w-[81px]" />
          <span className="ml-3">例如全角冒号: 替换成半角:</span>
        </FormRow>
        <FormRow label="打印时成份名称与成份内容的分割符:" className="h-[31px]">
          <Field label="打印时成份名称与成份内容的分割符:" value=":" className="w-[81px]" />
          <span className="ml-3 whitespace-pre">例如  “:” or “ “</span>
        </FormRow>
        <FormRow label="成份内容显示排列顺序:" className="h-[33px]">
          <span className="relative flex flex-1">
            <select id="成份内容显示排列顺序:" className={clsx('h-[21px] w-full min-w-0 appearance-none overflow-hidden pr-[17px] pl-px outline-none', sunken)}>
              <option>个百分比占一行成份内容单独换行与成份名称对齐</option>
            </select>
            <span className={clsx('pointer-events-none absolute top-[2px] right-[2px] flex h-[17px] w-4 items-center justify-center', raised)}>
              <Arrow />
            </span>
          </span>
        </FormRow>
        <FormRow label="成份名称列宽度(毫米):" className="h-[28px]">
          <Field label="成份名称列宽度(毫米):" className="w-[81px]" />
          <Check label="源数据成份内容预处理" className="ml-[7px]" />
        </FormRow>
        <FormRow label="成份内容行间距(毫米):" className="h-[29px]">
          <Field label="成份内容行间距(毫米):" value="1" className="w-[166px]" />
          <Push className="ml-[13px] w-10">...</Push>
        </FormRow>
        <FormRow label="成份名称行间距(毫米):" className="h-[29px]">
          <Field label="成份名称行间距(毫米):" value="5" className="w-[166px]" />
          <Push className="ml-[13px] w-10">...</Push>
        </FormRow>
        <div className="flex h-8 items-start">
          <p className="mt-[2px]">
            动态指定打印左上角位置(毫米),字体宽窄比,
            <br />
            行距和字体大小:
          </p>
          <Push className="mr-[10px] ml-auto w-16">增加</Push>
          <Push className="mr-[2px] w-16 text-[#808080] [text-shadow:1px_1px_0_#fff]">修正</Push>
        </div>
        <div className="grid grid-cols-[79px_74px_61px_64px_62px_58px_63px_60px] items-center gap-y-[4px]">
          {SIZE_FIELDS.map(([label, width]) => (
            <div key={label} className="contents">
              <label htmlFor={label}>{label}</label>
              <Field label={label} className={width} />
            </div>
          ))}
        </div>
        <textarea aria-label="参数列表" className={clsx('mt-[11px] h-[78px] w-full shrink-0 resize-none outline-none', sunken)} />
        <div className="flex items-start">
          <div className="mt-[9px] ml-[2px] flex flex-col gap-[10px]">
            <Check label="行超出边框本行压扁" />
            <Check label="行超出边框整体压扁" />
          </div>
          <Push className="mt-[22px] mr-[60px] ml-auto w-[89px]">高级设置</Push>
          <Push className="mt-[22px] mr-[32px] w-[89px]">清除</Push>
          <Push className="mt-[22px] -mr-px w-[89px] outline outline-black -outline-offset-1">确定</Push>
        </div>
      </div>
    </div>
  );
}

export default function App() {
  return (
    <div className="relative flex h-screen flex-col overflow-hidden bg-[#d4d0c8] font-['Noto_Sans_CJK_SC',sans-serif] text-[12px] leading-4 text-black">
      <header className="flex h-[18px] shrink-0 items-center gap-[3px] bg-linear-to-r from-[#808080] to-[#c0c0c0] pl-[2px] font-['Noto_Sans',sans-serif] text-[11px] font-bold text-[#d4d0c8]">
        <span className="flex h-4 w-4 items-center justify-center border border-black bg-white font-['Liberation_Sans',sans-serif] text-[10px] text-black">VP</span>
        Default1.mpd - VariPrint
      </header>
      <nav className="flex h-5 shrink-0 items-center gap-[11px] pl-[6px] text-[#808080]">
        {MENU.map((item) => (
          <button key={item}>{item}</button>
        ))}
      </nav>
      <Toolbars />

      <div className="flex min-h-0 flex-1 pt-px">
        <ToolColumns />
        <div className="-mt-px flex w-8 shrink-0 flex-col border-t border-r border-l border-black">
          <button aria-label="标尺" className="flex h-[31px] shrink-0 items-center border-b border-black pl-1">
            <svg className="h-[18px] w-[27px]" viewBox="0 0 27 18" shapeRendering="crispEdges">
              <path d="M4 4h11v11H4z" fill="#a5a5a5" />
              <path d="M4 15.5h11.5V5" stroke="#fff" fill="none" />
              <path d="M1 3.5h16M3.5 1v16" stroke="#0000ff" />
              <path d="M16 9h8l-4 4z" />
            </svg>
          </button>
          <div className="min-h-0 flex-1">
            <SideRuler />
          </div>
        </div>
        <main className="-mt-px flex min-w-0 flex-1 flex-col border-t border-black">
          <div className="h-[31px] shrink-0 border-b border-black">
            <TopRuler />
          </div>
          <div className="flex min-h-0 flex-1 bg-[#808080]">
            <div className="w-[179px] shrink-0" />
            <Page />
            <div className="ml-auto flex w-[17px] shrink-0 flex-col justify-between border-l border-white bg-[#eae8e3]">
              <div className={clsx('h-[476px]', raised)} />
              <button aria-label="向下" className={clsx('flex h-4 items-center justify-center', raised)}>
                <Arrow />
              </button>
            </div>
          </div>
        </main>
        <aside className="-mt-px flex w-[100px] shrink-0 flex-col border-t border-l border-t-black border-l-white pl-[5px]">
          <PropertyGrid rows={OBJECT_ROWS} className="h-[488px] shrink-0" />
          <div className="h-2 shrink-0 border-t border-white" />
          <PropertyGrid rows={PAGE_ROWS} className="min-h-0 flex-1" />
          <div className="flex h-[21px] shrink-0 items-start overflow-hidden whitespace-nowrap">
            <button className={clsx('h-[21px] w-[64px] shrink-0 pt-px', raised)}>页面信息</button>
            <button className={clsx('h-[19px] w-[64px] shrink-0 pl-[3px] text-left', raised)}>数据属性</button>
          </div>
        </aside>
      </div>

      <footer className="flex h-[27px] shrink-0 flex-col border-t border-[#808080]">
        <div className="flex h-[23px] items-center border-t border-b border-t-white border-b-[#808080] pl-[517px]">
          <span className="h-full w-[2px] border-r border-l border-r-white border-l-[#808080]" />
          <span className="ml-[2px] h-full w-[2px] border-r border-l border-r-[#808080] border-l-white" />
          <span className="w-[3px]" />
          <Tool name="first" off />
          <Tool name="prev" off />
          <Combo label="页" value="1/1" off className="w-[58px] font-['Liberation_Sans',sans-serif]" />
          <Tool name="next" off />
          <Tool name="last" off />
          <span className="h-full w-[2px] border-r border-l border-r-white border-l-[#808080]" />
        </div>
        <div className="border-b border-white pt-px" />
      </footer>

      <LayoutDialog />
    </div>
  );
}
